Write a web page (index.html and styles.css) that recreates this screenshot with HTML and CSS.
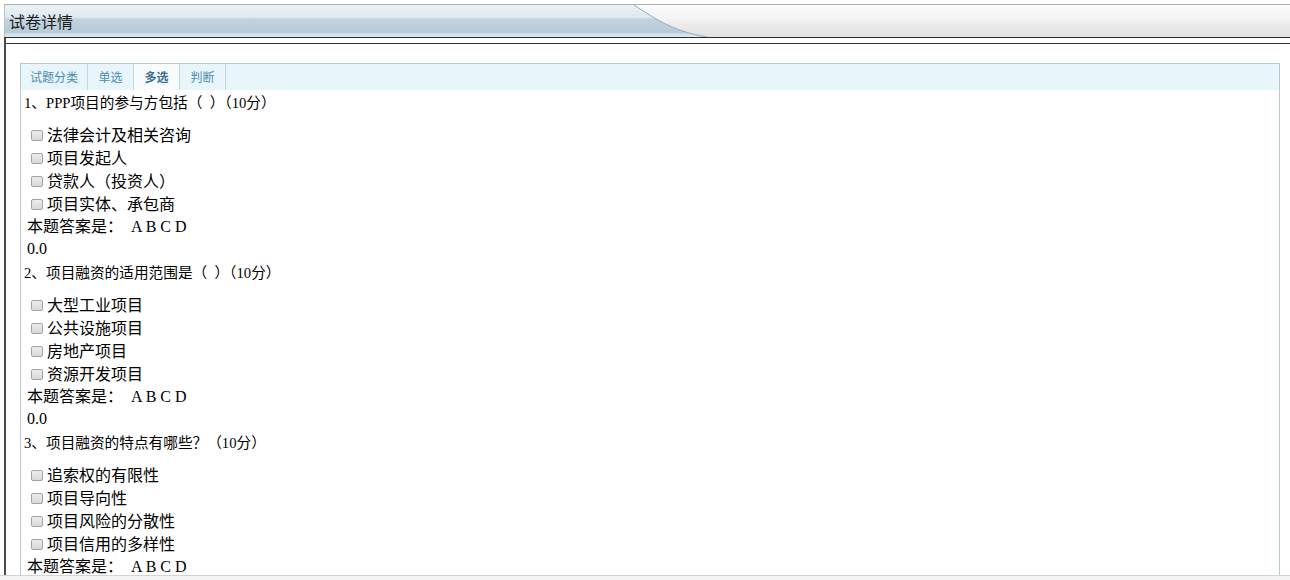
FILE: index.html
```html
<!DOCTYPE html>
<html lang="zh-CN">
<head>
<meta charset="utf-8">
<title>试卷详情</title>
<link rel="stylesheet" href="styles.css">
</head>
<body>
<div class="page">
  <div class="header">
    <svg class="header-bg" width="100%" height="32" aria-hidden="true">
      <defs>
        <linearGradient id="blue" x1="0" y1="0" x2="0" y2="1">
          <stop offset="0" stop-color="#ecf2f6"/>
          <stop offset="0.38" stop-color="#e0e9ef"/>
          <stop offset="0.44" stop-color="#c2d3de"/>
          <stop offset="0.86" stop-color="#b7cbd7"/>
          <stop offset="0.9" stop-color="#d0e1eb"/>
          <stop offset="1" stop-color="#dae9f2"/>
        </linearGradient>
      </defs>
      <path d="M0,0 H629 C645,10 665,26 702,32 H0 Z" fill="url(#blue)"/>
      <path d="M629,0 C645,10 665,26 702,32" fill="none" stroke="#93abbb" stroke-width="1"/>
    </svg>
    <span class="title">试卷详情</span>
  </div>
  <div class="frame">
    <div class="rule"></div>
    <div class="panel">
      <div class="tabs">
        <span class="tab">试题分类</span>
        <span class="tab">单选</span>
        <span class="tab active">多选</span>
        <span class="tab">判断</span>
      </div>
      <div class="questions">
        <div class="question">
          <div class="q-title">1、PPP项目的参与方包括（&nbsp;&nbsp;）（10分）</div>
          <ul class="options">
            <li><input type="checkbox" class="cb">法律会计及相关咨询</li>
            <li><input type="checkbox" class="cb">项目发起人</li>
            <li><input type="checkbox" class="cb">贷款人（投资人）</li>
            <li><input type="checkbox" class="cb">项目实体、承包商</li>
          </ul>
          <div class="answer">本题答案是：&nbsp; A B C D</div>
          <div class="score">0.0</div>
        </div>
        <div class="question">
          <div class="q-title">2、项目融资的适用范围是（&nbsp;&nbsp;）（10分）</div>
          <ul class="options">
            <li><input type="checkbox" class="cb">大型工业项目</li>
            <li><input type="checkbox" class="cb">公共设施项目</li>
            <li><input type="checkbox" class="cb">房地产项目</li>
            <li><input type="checkbox" class="cb">资源开发项目</li>
          </ul>
          <div class="answer">本题答案是：&nbsp; A B C D</div>
          <div class="score">0.0</div>
        </div>
        <div class="question">
          <div class="q-title">3、项目融资的特点有哪些？（10分）</div>
          <ul class="options">
            <li><input type="checkbox" class="cb">追索权的有限性</li>
            <li><input type="checkbox" class="cb">项目导向性</li>
            <li><input type="checkbox" class="cb">项目风险的分散性</li>
            <li><input type="checkbox" class="cb">项目信用的多样性</li>
          </ul>
          <div class="answer">本题答案是：&nbsp; A B C D</div>
          <div class="score">0.0</div>
        </div>
      </div>
    </div>
  </div>
</div>
<div class="hbar"></div>
</body>
</html>
```
FILE: styles.css
```css
html, body {
  margin: 0;
  padding: 0;
  height: 100%;
  overflow: hidden;
  background: #fff;
}
body {
  display: flex;
  flex-direction: column;
  font-family: "Liberation Serif", "Noto Sans CJK SC", serif;
  color: #000;
}
.page {
  flex: 1;
  min-height: 0;
  overflow: hidden;
  padding-top: 4px;
  padding-left: 4px;
}
.header {
  position: relative;
  height: 32px;
  border-top: 1px solid #a9b3b9;
  border-left: 1px solid #b6c1c8;
  background: linear-gradient(#fcfcfc 0%, #f5f5f5 40%, #ececec 60%, #e2e2e2 100%);
}
.header-bg {
  position: absolute;
  left: 0;
  top: 0;
  display: block;
}
.title {
  position: relative;
  display: block;
  padding-left: 4px;
  line-height: 32px;
  font-family: "Noto Sans CJK SC", sans-serif;
  font-size: 16px;
  color: #1c1c1c;
}
.frame {
  border-top: 1px solid #2b2b2b;
  border-left: 2px solid #4a4a4a;
}
.rule {
  margin-top: 5px;
  border-top: 1px solid #333;
}
.panel {
  margin: 19px 10px 0 14px;
  border: 1px solid #b6c8d2;
  border-bottom: none;
  min-height: 600px;
}
.tabs {
  display: flex;
  height: 26px;
  background: #e8f5fb;
}
.tab {
  box-sizing: border-box;
  min-width: 46px;
  padding: 0 9px;
  border-right: 1px solid #c3d6e2;
  font-family: "Noto Sans CJK SC", sans-serif;
  font-size: 12px;
  line-height: 26px;
  text-align: center;
  color: #4b8db5;
}
.tab.active {
  background: #f8fcfe;
  color: #3d6f8e;
  font-weight: bold;
}
.question {
  padding-top: 2px;
}
.q-title {
  padding-left: 3px;
  font-size: 14.67px;
  line-height: 22px;
}
.options {
  list-style: none;
  margin: 8px 0 2px 0;
  padding: 0 0 0 10px;
}
.options li {
  display: flex;
  align-items: center;
  height: 23px;
  font-size: 16px;
}
.cb {
  appearance: none;
  -webkit-appearance: none;
  box-sizing: border-box;
  width: 12px;
  height: 11px;
  margin: 4px 4px 0 0;
  border: 1px solid #a3a3a3;
  border-radius: 2px;
  background: linear-gradient(#ececec, #d9d9d9);
  flex: none;
}
.answer {
  padding-left: 6px;
  font-size: 16px;
  line-height: 22px;
}
.score {
  padding-left: 6px;
  font-size: 16px;
  line-height: 22px;
}
.hbar {
  flex: none;
  height: 4px;
  border-top: 1px solid #d3d3d3;
  background: #f4f4f4;
}
```
